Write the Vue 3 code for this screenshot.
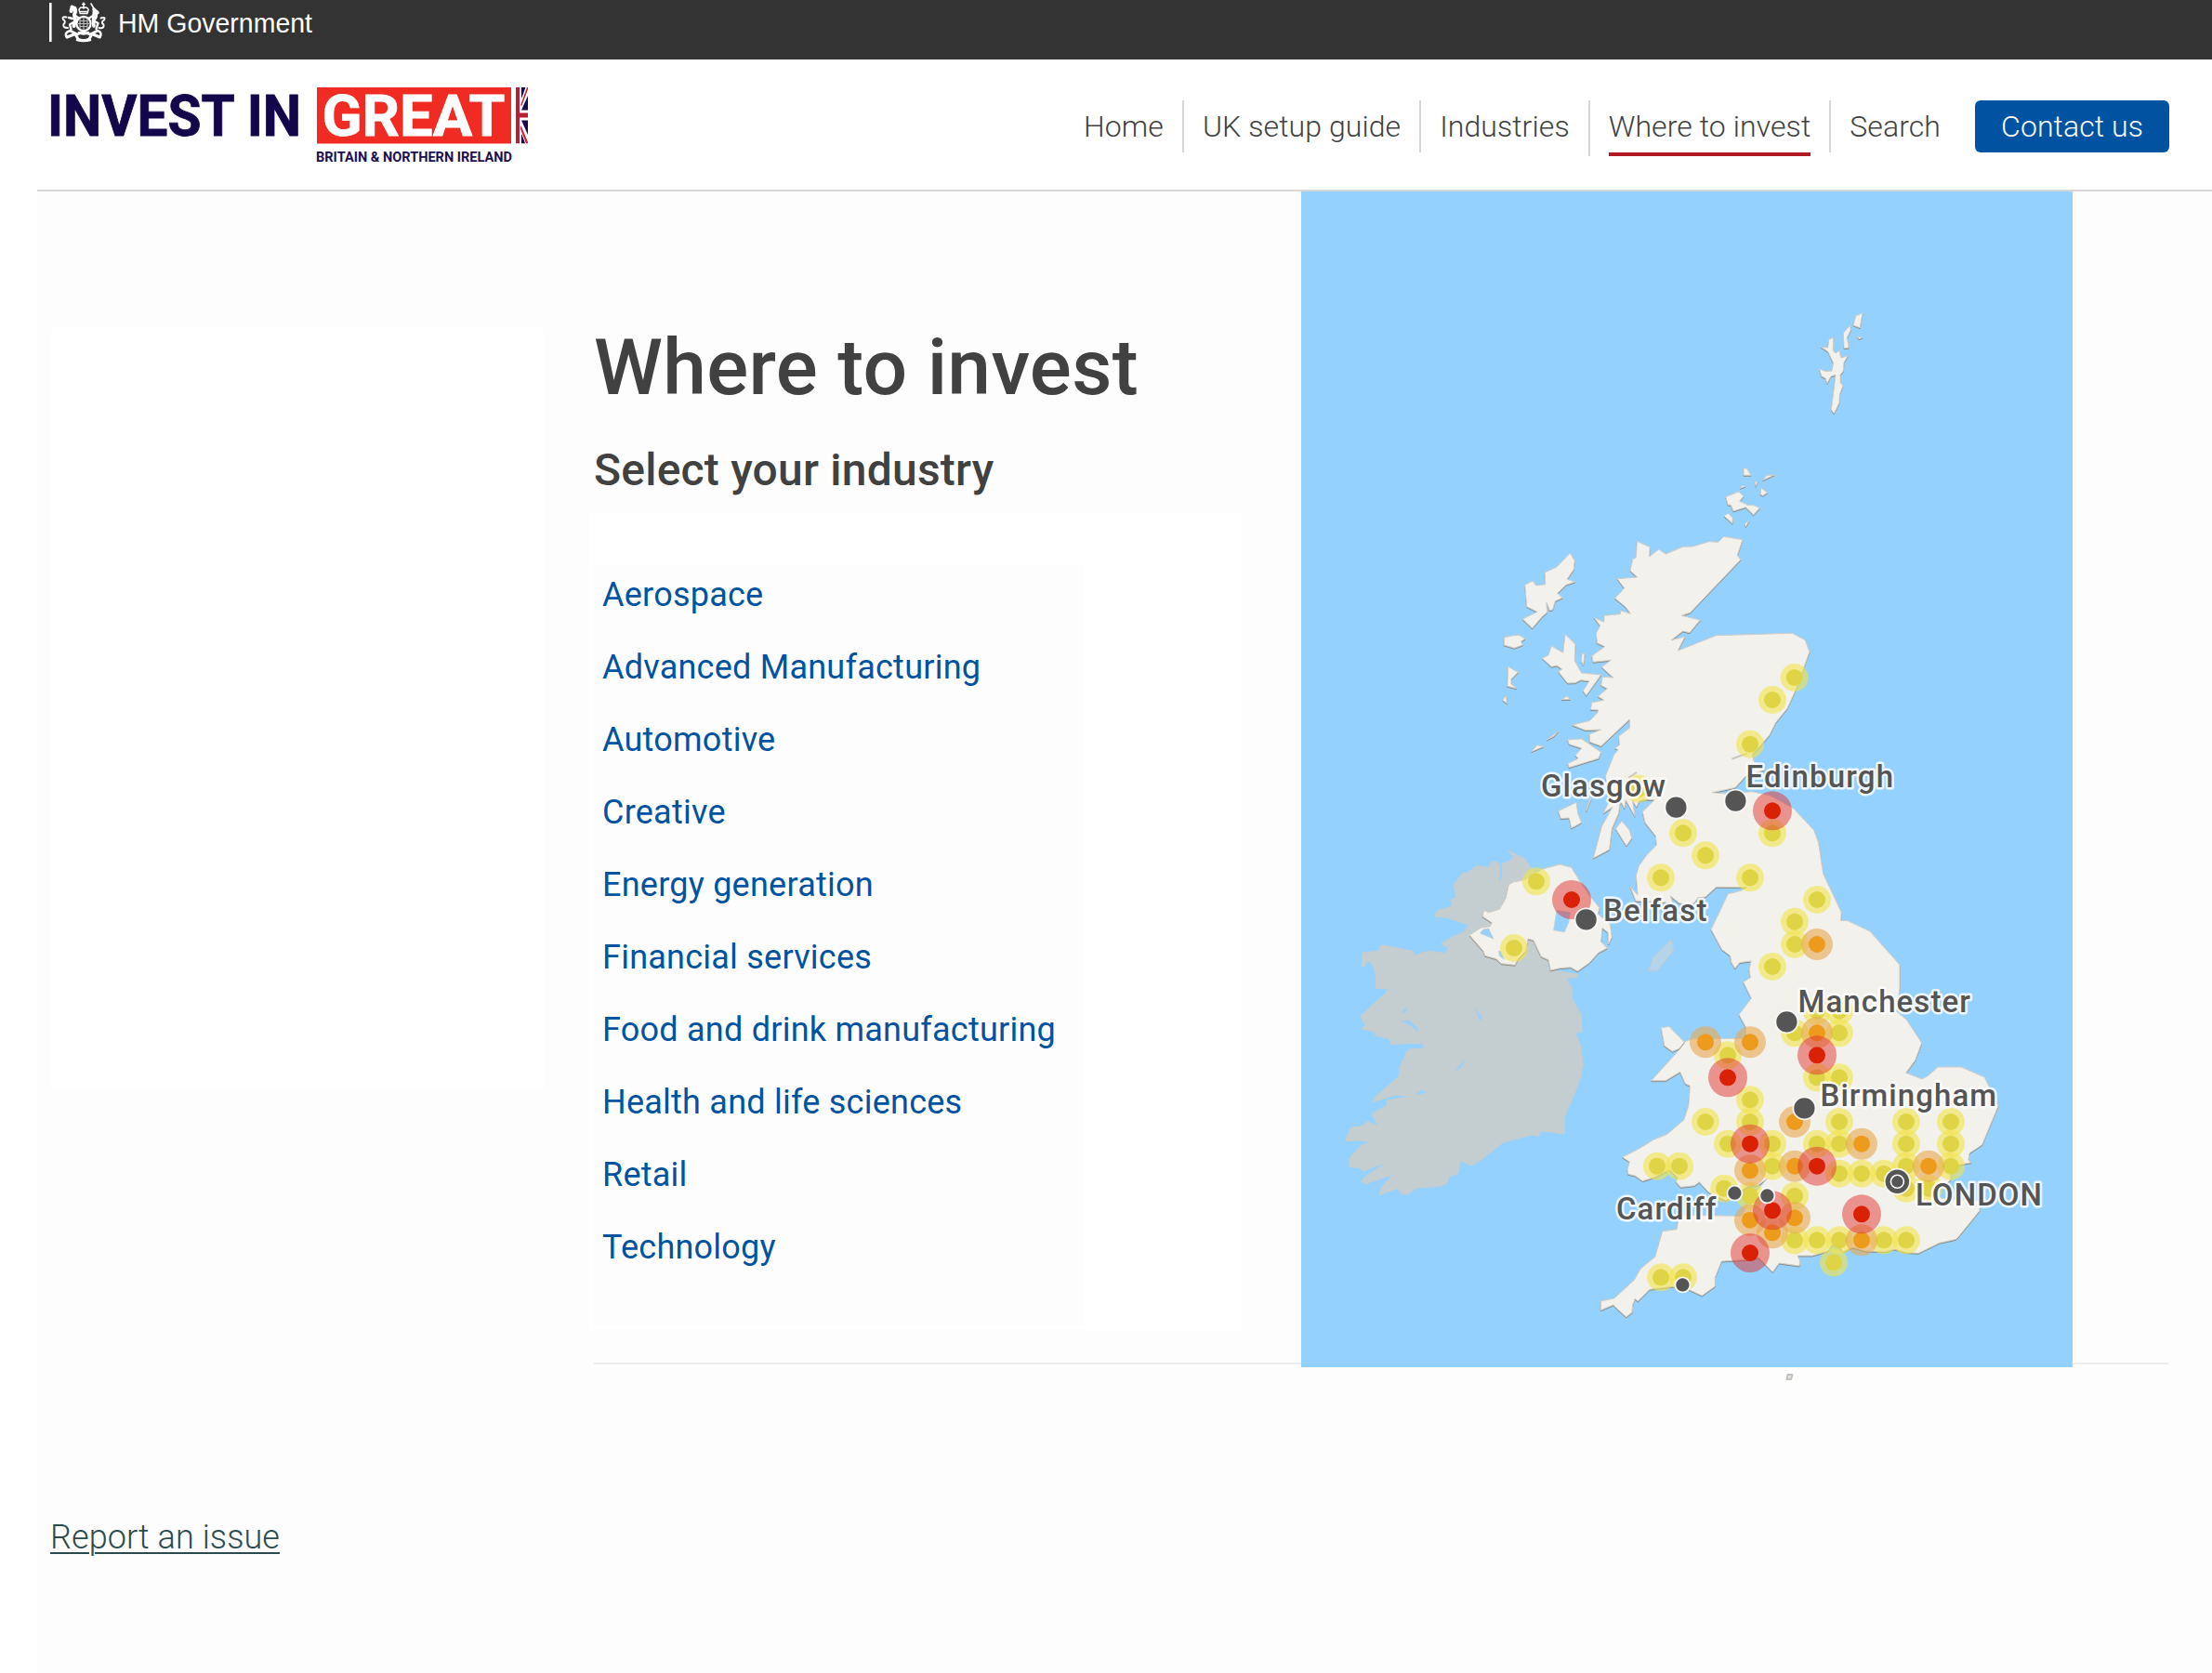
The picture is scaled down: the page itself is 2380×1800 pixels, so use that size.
<script setup>
const nav = [
  { label: 'Home' },
  { label: 'UK setup guide' },
  { label: 'Industries' },
  { label: 'Where to invest', active: true },
  { label: 'Search' },
]

const industries = [
  'Aerospace',
  'Advanced Manufacturing',
  'Automotive',
  'Creative',
  'Energy generation',
  'Financial services',
  'Food and drink manufacturing',
  'Health and life sciences',
  'Retail',
  'Technology',
]

// Coastlines are stored per map sheet: an origin plus points in thirds of a unit.
const sheets = {
  north: [1580, 540],
  ireland: [1420, 880],
  middle: [1700, 920],
  south: [1700, 1180],
  isles: [1800, 300],
}
const points = (sheet, text) => {
  const [ox, oy] = sheets[sheet]
  return text.trim().split(/\s+/).map((pair) => {
    const [x, y] = pair.split(',').map(Number)
    return `${(ox + x / 3).toFixed(1)} ${(oy + y / 3).toFixed(1)}`
  })
}
const shape = (...parts) => 'M' + parts.flatMap(([s, t]) => points(s, t)).join('L') + 'Z'

const mainland = shape(
  ['north', '544,127 586,146 584,177 614,153 637,168 692,145 725,144 775,128 806,130 824,112 885,122 868,172 878,187 716,357 688,367 748,381 714,422 692,417 655,446 699,435 676,480 800,431 1045,424 1087,446 1101,484 1055,610 1028,668 992,712 972,752 940,790 915,815 922,838 955,865 895,885 862,922 826,930 786,938 835,942 915,935 975,948 1050,990 1115,1060 1130,1100 1145,1200'],
  ['middle', '844,185 842,211 865,212 936,246 1032,354 1032,430 1022,505 1053,530 1103,606 1082,662 1052,703 1104,723 1124,712 1155,684 1230,684 1306,717 1350,810'],
  ['south', '1298,155 1257,182 1254,205 1263,212 1200,225 1195,270 1160,300 1120,318 1180,330 1290,335 1290,368 1215,460 1160,472 1093,505 1055,503 1015,492 985,500 920,498 880,486 850,500 820,470 800,498 750,513 702,513 710,530 708,546 643,537 622,566 575,518 560,525 457,531 436,584 436,612 394,642 350,622 300,612 225,622 187,660 178,652 170,672 168,696 149,711 107,672 67,689 67,660 110,651 175,592 195,556 242,517 266,434 312,428 320,382 520,385 540,355 560,315 604,265 575,285 540,290 470,335 415,308 385,275 370,287 325,292 310,275 315,262 290,235 240,260 202,272 178,255 155,250 153,235 160,210 137,195 190,168 240,137 280,122 335,75 350,30'],
  ['middle', '355,745 340,738 323,700 276,728 230,728 310,640 337,603 365,592 535,592 535,555 513,515 553,462 527,410 550,395 546,370 552,342 515,347 500,366 488,345 485,325 458,305 423,240 478,125 520,115 540,104 440,103 405,135 380,138 368,155 345,158 320,155 292,132 300,155 240,150 180,148 162,102 186,128'],
  ['north', '541,1205 550,1175 575,1140 607,1108 604,1078 570,1035 562,1000 600,962 575,960 552,965 542,985 530,965 537,1015 508,962 503,990 490,962 485,1005 463,1055 455,1122 403,1150 430,1048 465,985 435,1005 455,965 442,885 470,815 484,800 472,795 487,785 485,757 520,730 520,702 428,788 392,775 390,750 428,735 378,737 335,720 392,706 415,682 420,672 394,670 398,648 438,640 418,628 448,603 428,592 432,565 467,567 430,533 460,511 402,517 398,497 440,467 415,455 412,425 425,400 405,373 437,388 438,367 490,362 490,350 523,361 508,340 473,311 503,278 480,248 545,243 522,222 530,185 541,180'],
)

const islands = [
  ['middle', '262,558 287,553 337,603 320,625 298,634 272,615'],
  ['north', '328,165 343,190 340,218 318,250 344,258 315,268 287,295 303,310 280,320 272,348 262,350 252,325 254,357 238,370 206,408 175,378 222,355 188,338 182,268 208,255 218,270 248,266 246,228 285,210'],
  ['north', '115,438 140,432 162,430 183,442 170,450 175,462 148,472 115,462'],
  ['north', '128,532 160,550 138,572 138,588 155,602 125,595'],
  ['north', '122,625 124,650 110,640'],
  ['north', '300,638 318,628 328,637'],
  ['north', '312,427 345,460 343,513 365,552 428,558 380,625 370,610 390,578 362,575 345,584 320,585 290,548 302,540 285,528 268,532 238,505 258,495 268,465 305,487'],
  ['north', '366,490 375,490 371,527 364,515'],
  ['north', '320,768 365,765 428,808 420,828 325,857 320,845 355,828 345,818 365,795 325,782'],
  ['north', '203,806 222,785 242,790'],
  ['north', '253,768 290,740 275,757'],
  ['north', '290,998 348,970 353,1005 365,1035 332,1053 325,1020 298,1022'],
  ['north', '392,955 396,958 380,998'],
  ['north', '495,1030 520,1060 527,1085 510,1110 475,1055'],
  ['isles', '612,110 604,158 582,150 590,120'],
  ['isles', '572,150 574,165 562,190 568,222 552,224 550,175'],
  ['isles', '595,186 612,190 600,194'],
  ['isles', '478,220 500,222 503,195 518,190 517,230 525,240 537,232 543,255 565,248 552,270 550,298 540,310 541,335 549,345 538,375 537,400 520,435 511,422 525,310 510,315 497,338 492,320 480,315 472,290 490,298 512,298 518,272 500,235'],
  ['isles', '228,612 238,612 252,634 228,634'],
  ['isles', '290,650 302,635 327,633'],
  ['isles', '264,655 273,655 268,670'],
  ['isles', '284,676 305,690 290,700 282,695'],
  ['isles', '216,676 225,666 234,670'],
  ['isles', '170,704 212,687 228,702 215,718 240,730 265,732 280,740 260,762 235,737 195,750 187,730 178,730'],
  ['isles', '165,765 178,757 193,772 192,790'],
  ['isles', '232,790 245,782 235,800'],
].map((part) => shape(part))

const northernIreland = shape(['ireland', '610,215 625,207 660,200 720,165 775,150 812,160 840,205 870,250 903,290 898,310 938,345 943,385 932,408 930,370 912,355 908,400 928,420 900,435 870,468 832,495 810,482 775,485 745,492 738,458 715,448 690,395 672,390 665,430 640,455 630,475 585,470 570,455 533,445 528,430 483,378 520,355 550,350 556,338 525,318 530,298 545,305 580,295 600,260'])

const ireland = shape(['ireland', '608,105 662,132 680,160 700,180 720,400 740,490 830,505 832,513 795,518 813,550 815,585 843,635 846,688 825,695 840,730 850,795 838,850 790,965 790,1020 715,1010 705,1028 690,1022 640,1034 590,1048 520,1105 488,1122 452,1105 448,1145 415,1160 412,1178 390,1188 310,1195 285,1215 262,1213 250,1195 190,1218 205,1185 240,1150 150,1180 135,1175 145,1160 218,1110 140,1140 130,1130 95,1125 95,1100 130,1060 165,1045 120,1040 82,1043 100,1000 135,995 155,980 190,995 168,955 215,930 218,912 350,888 328,877 300,897 240,895 172,917 180,900 255,835 260,800 285,748 340,743 330,727 230,730 225,712 180,703 175,690 135,680 148,670 132,640 225,553 180,550 182,520 175,480 160,462 150,465 145,478 135,478 140,435 190,430 198,410 300,430 303,445 350,430 405,437 415,420 392,405 430,383 465,368 480,345 460,338 412,322 370,318 378,300 428,285 422,265 440,258 433,215 460,180 475,178 505,155 530,158 548,160 552,145 570,140 580,155 578,215 590,190 588,148 612,140 625,125'])

const lakes = [
  '765,298 808,305 804,335 790,368 755,362',
  '518,372 528,360 545,357 560,390',
  '578,430 585,432 595,457 580,445',
  '500,608 525,645 515,657',
  '472,775 458,805 430,823',
  '262,655 290,653 318,680 317,692 295,672',
  '282,607 278,630 262,628',
].map((t) => shape(['ireland', t]))

const isleOfMan = shape(['ireland', '1135,392 1142,428 1090,492 1062,494 1075,450'])

const rows = (pairs) => pairs.flatMap(([y, ...xs]) => xs.map((x) => ({ x, y })))
const clusters = [
  {
    name: 'low', halo: 15,
    spots: rows([
      [729, 1930.7], [753, 1907], [800.7, 1883], [848.7, 1763], [896.3, 1811, 1907], [920.3, 1835],
      [944.3, 1787, 1883], [968, 1955], [948.3, 1653], [1020, 1629], [991.7, 1931], [1016, 1931],
      [1040, 1907], [1087.7, 1955, 1979], [1111.3, 1931, 1979], [1135.3, 1859], [1159.3, 1955, 1979],
      [1183.3, 1883], [1207, 1835, 1883, 1979, 2051, 2099], [1230.7, 1859, 1907, 1955, 1979, 2051, 2099],
      [1254.7, 1783, 1807, 1907, 2051, 2099], [1262.7, 1979, 2003, 2027], [1278.7, 1855, 2051, 2075],
      [1286.7, 1883, 1931], [1334.3, 1931, 1955, 1979, 2027, 2051], [1358.3, 1973], [1374.3, 1787, 1811],
    ]),
  },
  {
    name: 'medium', halo: 17,
    spots: rows([
      [1016, 1955], [1121.3, 1835, 1883], [1111.3, 1955], [1207, 1931], [1230.7, 2003],
      [1259.3, 1883], [1254.7, 1931, 2075], [1312.7, 1883], [1310.3, 1931], [1326.3, 1907], [1334.3, 2003],
    ]),
  },
  {
    name: 'high', halo: 21,
    spots: rows([
      [872.3, 1907], [968, 1691], [1159.3, 1859], [1135.3, 1955], [1230.7, 1883],
      [1254.7, 1955], [1302.3, 1907], [1306.3, 2003], [1348, 1883],
    ]),
  },
]

const markers = [
  { x: 1803.4, y: 868.7, r: 12 },
  { x: 1867.4, y: 861.7, r: 12 },
  { x: 1706.6, y: 989.4, r: 12 },
  { x: 1922.4, y: 1099.4, r: 12 },
  { x: 1941.4, y: 1192.4, r: 12 },
  { x: 1866.4, y: 1283.7, r: 8 },
  { x: 1901.4, y: 1286.4, r: 8 },
  { x: 1810.4, y: 1382.4, r: 8 },
]

const cities = [
  { name: 'Glasgow', x: 1658, y: 856.8, w: 134 },
  { name: 'Edinburgh', x: 1878.5, y: 846.7, w: 158.5 },
  { name: 'Belfast', x: 1725, y: 990.6, w: 111.5 },
  { name: 'Manchester', x: 1934.5, y: 1088.8, w: 185.5 },
  { name: 'Birmingham', x: 1958.5, y: 1189.5, w: 189.5 },
  { name: 'LONDON', x: 2061, y: 1296.7, w: 136 },
  { name: 'Cardiff', x: 1739, y: 1312.3, w: 107.5 },
]
</script>

<template>
  <div class="page">
    <div class="gov-bar">
      <svg class="gov-logo" width="300" height="48" viewBox="0 0 300 48">
        <rect x="1" y="3" width="2.6" height="42" fill="#fff" />
        <g fill="none" stroke="#fff" stroke-linecap="round" stroke-linejoin="round">
          <g stroke-width="1.4">
            <path d="M33 10.500Q34 7 38 8.500Q42 7 43.200 10.500L42 14.500H34.200ZM38 3v6M36.600 4.500h2.800M34.500 12.500h7.200" />
          </g>
          <circle cx="38" cy="25.500" r="7.600" stroke-width="2.200" />
          <path d="M38 19v13M32 25.500h12M34 20.500v10M42 20.500v10M34 22.500h8M34 28.500h8" stroke="#bbb" stroke-width="1.200" />
          <path d="M25.500 7.500L28 10M24.500 12Q25 6.500 28.500 9Q30 12 28 15.500L29 22L27.500 28" stroke-width="4" />
          <path d="M29 17l4 2.500M26 20l-4-1M27 24l-4 2.500l1.500 5" stroke-width="2.400" />
          <path d="M21 30Q15 30 16.500 26Q19.500 23 16 21Q14 17.500 19.500 18.500" stroke-width="1.900" />
          <path d="M46 4l4 7" stroke-width="1.600" />
          <path d="M49 10L53 13.500M49.500 11.500L49 17L48.500 23L49 28" stroke-width="3.600" />
          <path d="M51 12Q53.500 19 49 21" stroke-width="2.600" />
          <path d="M48 17l-4 2.500M50 23l3.500 2l-2 6" stroke-width="2.400" />
          <path d="M54.500 30Q60.500 31 59.500 26.500Q56 24 60 21.500Q62 17.500 56.500 19.500" stroke-width="1.900" />
          <path d="M20 40Q16.500 35 23.500 33L31 37L37 34.500L45 37L53 33Q58.500 35 55.500 39.500" stroke-width="2.600" />
          <path d="M20 40L29 36.500L32 42Q38 45 44 42L47 36.500L55.500 40" stroke-width="3" />
          <path d="M31 43Q38 45 45 43M33 35Q38 38 43 35" stroke-width="2.600" />
        </g>
        <text x="75" y="35" class="gov-text" textLength="209" lengthAdjust="spacingAndGlyphs">HM Government</text>
      </svg>
    </div>

    <header class="header">
      <svg class="brand" width="520" height="90" viewBox="54 90 520 90">
        <text x="51" y="146" class="brand-name" textLength="273" lengthAdjust="spacingAndGlyphs">INVEST IN</text>
        <rect x="341" y="94" width="209" height="60.500" fill="#ef2b24" />
        <text x="346.500" y="146" class="brand-name brand-great" textLength="197" lengthAdjust="spacingAndGlyphs">GREAT</text>
        <text x="340" y="173.600" class="brand-region" textLength="211" lengthAdjust="spacingAndGlyphs">BRITAIN &amp; NORTHERN IRELAND</text>
        <svg x="555" y="94" width="13" height="60.500" viewBox="555 94 13 60.500">
          <rect x="555" y="94" width="13" height="60.500" fill="#fff" />
          <path d="M561 94h4.500l-4.500 12ZM568 103v15.500h-7ZM561 129.500h7v15.500ZM561 143l4.500 11.500h-4.500Z" fill="#170a4f" />
          <path d="M568 94v2l-6.500 17.500h-1.500l7-19.500ZM560.500 135l7.500 18v1.500h-2l-6-16Z" fill="#fff" stroke="#fff" stroke-width="1.600" />
          <path d="M568 94v2l-6.500 17.500h-1.500l7-19.500ZM560.500 135l7.500 18v1.500h-2l-6-16Z" fill="#c8203a" />
          <path d="M555 94h4v60.500h-4ZM555 121.500h13v5h-13Z" fill="#b81f35" />
        </svg>
      </svg>

      <nav class="nav">
        <a v-for="item in nav" :key="item.label" class="nav-item" :class="{ active: item.active }">
          <span class="nav-label">{{ item.label }}</span>
        </a>
        <a class="contact">Contact us</a>
      </nav>
    </header>

    <main class="main">
      <aside class="side-panel"></aside>

      <section class="content">
        <h1>Where to invest</h1>
        <h2>Select your industry</h2>
        <div class="panel">
          <ul class="industries">
            <li v-for="name in industries" :key="name"><a>{{ name }}</a></li>
          </ul>
        </div>
      </section>

      <svg class="map" width="830" height="1282" viewBox="1400 206 830 1282">
        <rect x="1400" y="206" width="830" height="1265" fill="#95d1ff" />
        <path :d="ireland" class="ireland" />
        <path :d="isleOfMan" class="man" />
        <g class="land">
          <path :d="mainland" />
          <path v-for="(d, i) in islands" :key="i" :d="d" />
          <path :d="northernIreland" />
        </g>
        <path v-for="(d, i) in lakes" :key="'lake' + i" :d="d" class="lake" />
        <path d="M1863.500 816.500L1880 810.500M1752 837l9-6" class="inlet" />
        <g v-for="level in clusters" :key="level.name" :class="level.name">
          <circle v-for="(s, i) in level.spots" :key="'halo' + i" :cx="s.x" :cy="s.y" :r="level.halo" class="halo" />
          <circle v-for="(s, i) in level.spots" :key="'core' + i" :cx="s.x" :cy="s.y" r="9" class="core" />
        </g>
        <circle v-for="(m, i) in markers" :key="'m' + i" :cx="m.x" :cy="m.y" :r="m.r" class="marker" />
        <circle cx="2041.400" cy="1271.300" r="13.600" class="marker" />
        <circle cx="2041.400" cy="1271.300" r="7" class="capital-ring" />
        <text
          v-for="c in cities" :key="c.name" :x="c.x" :y="c.y" :textLength="c.w" class="city"
        >{{ c.name }}</text>
        <path d="M1923.500 1479h5l-1.500 5h-4.500Z" class="islet" />
      </svg>
    </main>

    <footer class="footer"><a>Report an issue</a></footer>
  </div>
</template>

<style>
body {
  margin: 0;
  background: #fff;
}
</style>

<style scoped>
.page {
  width: 2380px;
  height: 1800px;
  overflow: hidden;
  display: flex;
  flex-direction: column;
  box-sizing: border-box;
  font-family: Roboto, "Liberation Sans", sans-serif;
  color: #414141;
  background: linear-gradient(90deg, #fff 40px, #fdfdfd 40px);
}
.gov-bar {
  height: 64px;
  flex: none;
  background: #333;
  padding-left: 52px;
}
.gov-logo { display: block; }
.gov-text {
  font-family: "Liberation Sans", Arial, sans-serif;
  font-size: 30px;
  fill: #fff;
}
.header {
  height: 142px;
  flex: none;
  box-sizing: border-box;
  display: flex;
  justify-content: space-between;
  align-items: flex-start;
  padding: 26px 46px 0 54px;
  background: linear-gradient(#d7d7d7, #d7d7d7) 40px 100% / 100% 2px no-repeat #fff;
}
.brand { display: block; overflow: visible; }
.brand-name {
  font-family: Roboto, sans-serif;
  font-weight: 700;
  font-size: 62px;
  fill: #14064a;
  stroke: #14064a;
  stroke-width: 0.8px;
}
.brand-great { fill: #fff; stroke: #fff; }
.brand-region {
  font-weight: 700;
  font-size: 15px;
  fill: #1c1050;
}
.nav {
  display: flex;
  align-items: flex-start;
  padding-top: 18px;
  font-size: 32px;
  line-height: 56px;
  font-weight: 300;
  letter-spacing: 0.08px;
}
.nav-item {
  padding: 0 20px;
  border-left: 2px solid #d6d6d6;
}
.nav-item:first-child { border-left: 0; }
.nav-item:nth-child(5) { padding-right: 37px; }
.nav-label { display: block; }
.active .nav-label { border-bottom: 4px solid #b11923; }
.contact {
  width: 209px;
  text-align: center;
  color: #fff;
  background: #0053a0;
  border-radius: 6px;
}
.main {
  display: flex;
  align-items: flex-start;
  height: 1262px;
  flex: none;
  margin: 0 47px 0 55px;
  background: linear-gradient(#ededed, #ededed) 584px 100% / 100% 2px no-repeat;
}
.side-panel {
  width: 530px;
  height: 818px;
  margin-top: 147px;
  background: #fff;
}
.content {
  width: 815px;
  flex: none;
  box-sizing: border-box;
  padding: 132px 0 0 50px;
}
h1, h2 {
  margin: 0;
  padding-left: 4px;
  font-weight: 500;
  white-space: nowrap;
}
h1 { font-size: 84px; line-height: 116px; letter-spacing: 0.3px; }
h2 { margin-top: 20px; font-size: 48px; line-height: 64px; letter-spacing: 0.22px; }
.panel {
  width: 701px;
  height: 878px;
  margin-top: 14px;
  box-sizing: border-box;
  padding: 55px 0 0 2px;
  background: #fff;
}
.industries {
  display: flow-root;
  width: 518px;
  height: 820px;
  margin: 0;
  padding: 0 0 0 11px;
  list-style: none;
  background: #fdfdfd;
  font-size: 36px;
  line-height: 78px;
  letter-spacing: 0.24px;
  color: #0053a0;
  white-space: nowrap;
}
.industries li:first-child { margin-top: -6px; }
.map { display: block; flex: none; }
.ireland { fill: #c4cdd0; stroke: #c9cdcb; stroke-width: 1; }
.man { fill: #b5d4e8; stroke: #bccbd4; stroke-width: 1; }
.land path {
  fill: #f3f1ec;
  stroke: #cfccc6;
  stroke-width: 1;
  stroke-linejoin: round;
  filter: drop-shadow(0.5px 1.2px 0.5px rgba(130, 115, 95, 0.7));
}
.lake { fill: #95d1ff; stroke: #c0ccd2; stroke-width: 0.8; }
.inlet { stroke: #c9c6c2; stroke-width: 2; fill: none; }
.halo { opacity: 0.6; }
.low .halo { fill: #f1e44b; }
.low .core { fill: #dfd446; }
.medium .halo { fill: #e8a950; }
.medium .core { fill: #ec9b1d; }
.high .halo { fill: #df332f; opacity: 0.5; }
.high .core { fill: #d92106; }
.marker { fill: #555; stroke: #fff; stroke-opacity: 0.9; stroke-width: 1.8; }
.capital-ring { fill: #555; stroke: #fff; stroke-width: 1.6; }
.city {
  font-size: 33px;
  font-weight: 500;
  fill: #555;
  stroke: rgba(255, 255, 255, 0.85);
  stroke-width: 5px;
  stroke-linejoin: round;
  paint-order: stroke;
}
.islet { fill: #e6e6e4; stroke: #c2c1bd; stroke-width: 2; stroke-linejoin: round; }
.footer {
  padding: 164px 0 0 54px;
  font-size: 36px;
  line-height: 44px;
  font-weight: 300;
  letter-spacing: 0.08px;
  color: #2c4b4e;
}
.footer a {
  text-decoration: underline;
  text-decoration-thickness: 2px;
  text-underline-offset: 4px;
}
</style>
